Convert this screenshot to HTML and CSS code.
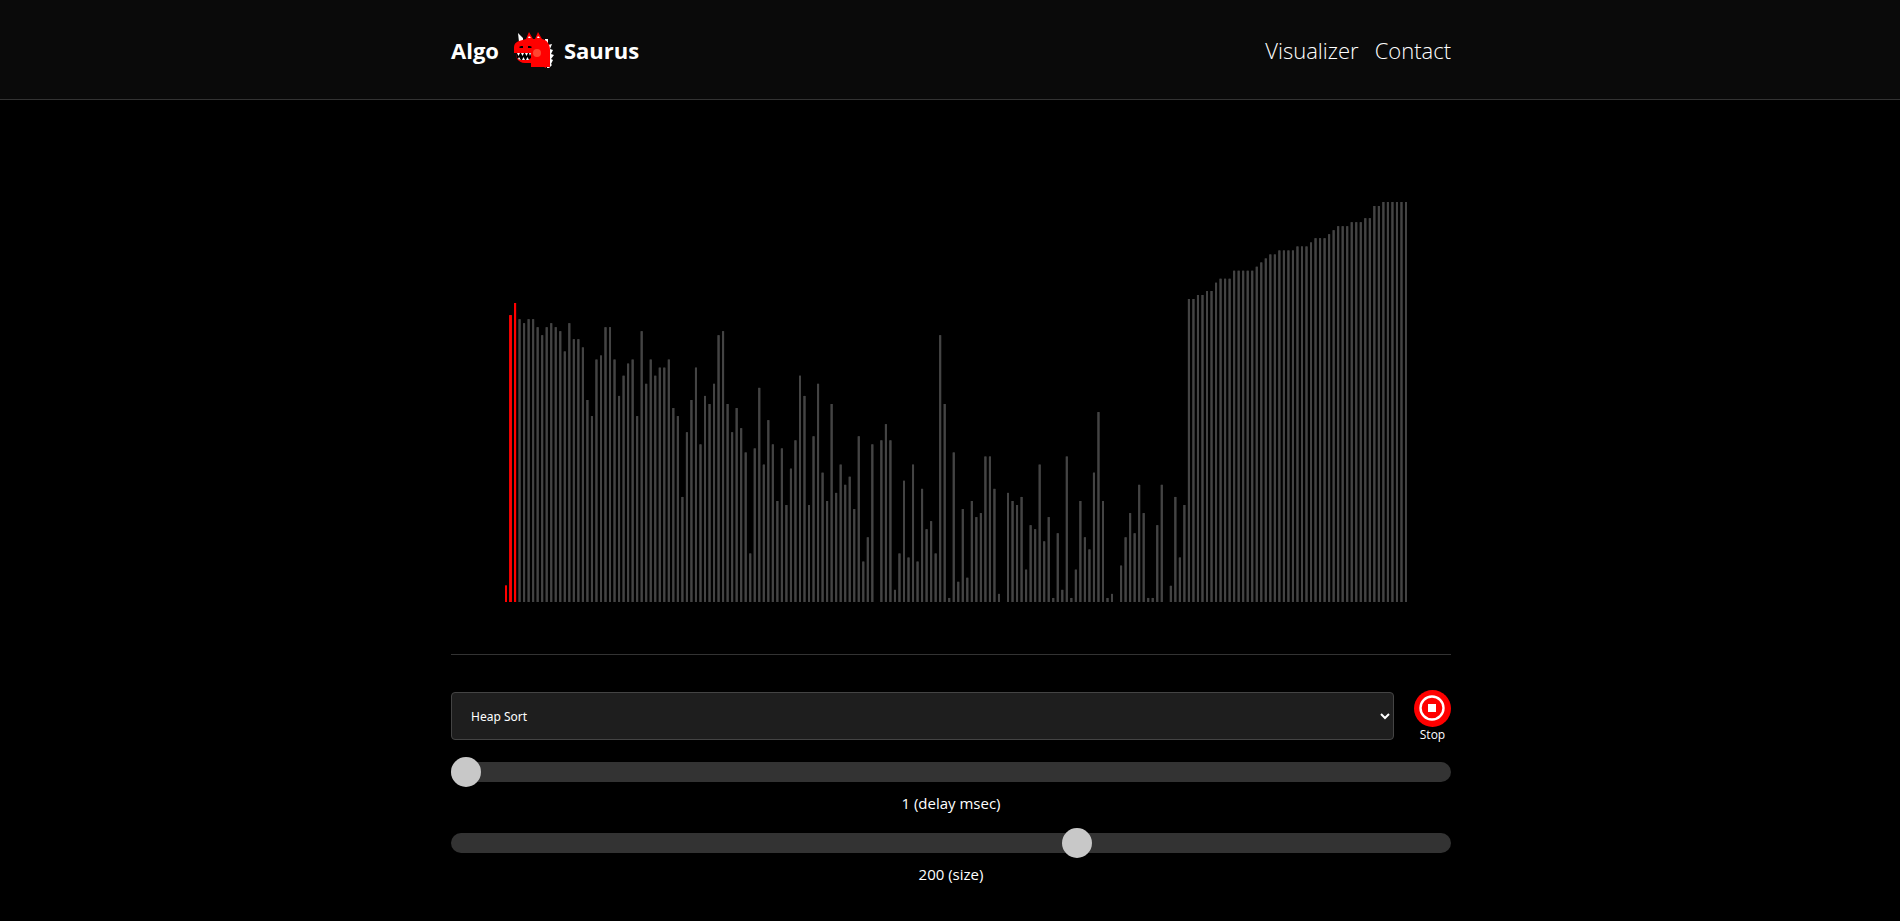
FILE: index.html
```html
<!DOCTYPE html>
<html lang="en">
<head>
<meta charset="utf-8">
<title>Algo Saurus</title>
<link rel="stylesheet" href="styles.css">
</head>
<body>
<header class="header">
  <div class="container header-row">
    <a class="brand" href="#">
      <span>Algo</span>
      <svg class="brand-logo" viewBox="0 0 40 36" aria-hidden="true">
        <path fill="#fff" d="M4 1l5 5v4H5zM31 7h3v4h-3zM34 13l4-1-2 5 3 1-2 4 3 1-3 4 2 1-2 4 1 1-3 3h-2V13z"/>
        <path fill="#f00" d="M5 9l7-2 3-7 4 7h2l3-7 4 7c5 1 8 5 8 11v17h-4v1l-2-1H17v-4H11c-4 0-6-2-8-4l-1-6H0v-6c0-3 2-5 5-6z"/>
        <path fill="#fff" d="M14 6l1-2 2 2zM23 6l1-2 2 2z"/>
        <path fill="#000" d="M2 21h15v5l-3 2H6l-3-2z"/>
        <path fill="#fff" d="M3 21h3l-1.500 3zM7 21h3l-1.500 3zM11 21h3l-1.500 3zM15 21h2l-1 3zM4 27l1-2 2 3zM8 28l1.500-3 1.500 3zM12 28l1.500-3 1.500 3z"/>
        <path fill="#000" d="M5 15l2-1h2v2H6zM14 14h2l2 1-1 1h-3z"/>
        <circle cx="23" cy="21" r="4" fill="#ff4530"/>
      </svg>
      <span>Saurus</span>
    </a>
    <nav class="nav">
      <a href="#">Visualizer</a>
      <a href="#">Contact</a>
    </nav>
  </div>
</header>
<main class="container">
  <section class="chart">
    <svg class="bars" viewBox="0 0 1000 400" role="img" aria-label="Array values"></svg>
  </section>
  <form class="controls">
    <div class="control-row">
      <select class="algorithm" aria-label="Algorithm">
        <option>Heap Sort</option>
      </select>
      <button class="stop" type="button">
        <svg class="stop-icon" viewBox="0 0 37 37" aria-hidden="true">
          <circle cx="18.500" cy="18.500" r="18.500" fill="#f00"/>
          <circle cx="18" cy="18" r="11.500" fill="none" stroke="#fff" stroke-width="2.400"/>
          <rect x="14" y="14" width="8" height="8" fill="#fff"/>
        </svg>
        <span>Stop</span>
      </button>
    </div>
    <input class="slider" id="delay" type="range" min="1" max="100" value="1">
    <label class="slider-label" for="delay">1 (delay msec)</label>
    <input class="slider" id="size" type="range" min="30" max="300" value="200">
    <label class="slider-label" for="size">200 (size)</label>
  </form>
</main>
<script src="script.js"></script>
</body>
</html>
```
FILE: styles.css
```css
* {
  box-sizing: border-box;
}

body {
  margin: 0;
  background: #000;
  color: #fff;
  font-family: "Open Sans", "Noto Sans", sans-serif;
}

a {
  color: inherit;
  text-decoration: none;
}

.container {
  max-width: 1002px;
  margin: 0 auto;
  padding-left: 2px;
}

.header {
  background: #0a0a0a;
  border-bottom: 1px solid #333;
}

.header-row {
  display: flex;
  align-items: center;
  justify-content: space-between;
  height: 99px;
}

.brand {
  display: flex;
  align-items: center;
  gap: 10px;
  font-size: 22px;
  font-weight: 700;
}

.brand-logo {
  width: 40px;
  height: 36px;
  margin-left: 5px;
}

.nav {
  display: flex;
  gap: 16px;
  font-size: 22px;
  font-weight: 300;
}

.chart {
  padding: 102px 0 52px;
  border-bottom: 1px solid #333;
}

.bars {
  display: block;
  width: 100%;
}

.bar {
  stroke: #444;
  stroke-width: 2;
}

.bar-active {
  stroke: #f00;
}

.controls {
  display: flex;
  flex-direction: column;
  padding-top: 35px;
}

.control-row {
  display: flex;
  align-items: flex-start;
  gap: 20px;
  margin-bottom: 14px;
}

.algorithm {
  flex: 1;
  height: 48px;
  margin-top: 2px;
  padding: 0 0 0 15px;
  border: 1px solid #444;
  border-radius: 4px;
  background: #1e1e1e;
  color: #fff;
  font: 12px "Noto Sans", sans-serif;
}

.stop {
  display: flex;
  flex-direction: column;
  align-items: center;
  padding: 0;
  border: 0;
  background: none;
  color: #fff;
  font: 12px/16px "Open Sans", sans-serif;
}

.stop-icon {
  width: 37px;
  height: 37px;
}

.slider {
  appearance: none;
  width: 100%;
  height: 30px;
  margin: 0;
  background: none;
}

.slider::-webkit-slider-runnable-track {
  height: 20px;
  border-radius: 10px;
  background: #333;
}

.slider::-webkit-slider-thumb {
  appearance: none;
  width: 30px;
  height: 30px;
  margin-top: -5px;
  border-radius: 50%;
  background: #c8c8c8;
}

.slider-label {
  height: 41px;
  padding-top: 5px;
  font-size: 15px;
  line-height: 22px;
  text-align: center;
}
```
FILE: script.js
```js
const values = [
  4, 71, 74, 70, 69, 70, 70, 68, 66, 68, 69, 68, 67, 62, 69, 65, 65, 63, 50, 46,
  60, 61, 68, 68, 60, 51, 56, 59, 60, 46, 67, 54, 60, 56, 58, 58, 60, 48, 46, 26,
  42, 50, 58, 39, 51, 49, 54, 66, 67, 49, 42, 48, 43, 37, 12, 38, 53, 34, 45, 39,
  25, 38, 24, 33, 40, 56, 51, 24, 41, 54, 32, 25, 49, 27, 34, 29, 31, 23, 41, 10,
  16, 39, 0, 40, 44, 40, 3, 12, 30, 11, 34, 10, 28, 18, 20, 12, 66, 49, 1, 37,
  5, 23, 6, 25, 21, 22, 36, 36, 28, 2, 0, 27, 25, 24, 26, 8, 19, 18, 34, 15,
  21, 1, 17, 3, 36, 1, 8, 25, 16, 13, 32, 47, 25, 1, 2, 0, 9, 16, 22, 17,
  29, 22, 1, 1, 19, 29, 0, 4, 26, 11, 24, 75, 75, 76, 76, 77, 77, 79, 80, 80,
  80, 82, 82, 82, 82, 82, 83, 84, 85, 86, 86, 87, 87, 87, 87, 88, 88, 88, 89, 90,
  90, 90, 91, 92, 93, 93, 93, 94, 94, 94, 95, 95, 98, 98, 99, 99, 99, 99, 99, 99
];
const active = new Set([0, 1, 2]);
const chart = document.querySelector(".bars");
const left = 55;
const span = 900;
const height = 400;

values.forEach((value, i) => {
  const bar = document.createElementNS("http://www.w3.org/2000/svg", "line");
  const x = left + (i * span) / (values.length - 1);
  bar.setAttribute("x1", x);
  bar.setAttribute("x2", x);
  bar.setAttribute("y1", height);
  bar.setAttribute("y2", height - (value * height) / 99);
  bar.setAttribute("class", active.has(i) ? "bar bar-active" : "bar");
  // Repeated passes firm up the antialiased edges of each bar.
  const passes = active.has(i) ? 4 : 2;
  for (let pass = 0; pass < passes; pass++) {
    chart.appendChild(bar.cloneNode());
  }
});
```
